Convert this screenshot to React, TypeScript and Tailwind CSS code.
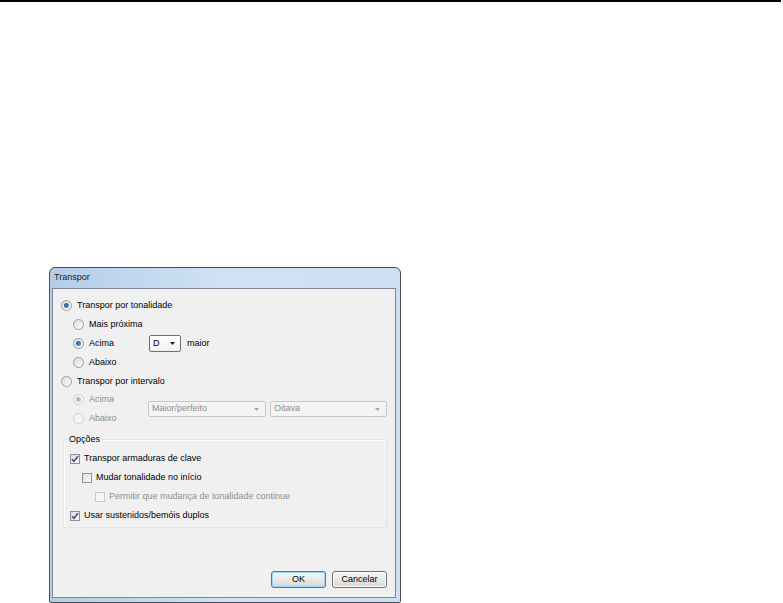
import React from 'react';

const font = { fontFamily: '"Liberation Sans", Arial, sans-serif' };

function Radio({ checked = false, disabled = false }: { checked?: boolean; disabled?: boolean }) {
  return (
    <span
      className={`flex items-center justify-center w-[11px] h-[11px] rounded-full border shrink-0 bg-gradient-to-br ${
        disabled ? 'border-[#cfcfcf] from-[#f0f0f0] to-[#f8f8f8]' : 'border-[#9a9c9e] from-[#dcdcdc] to-[#fbfbfb]'
      }`}
    >
      {checked && (
        <span
          className={`w-[5px] h-[5px] rounded-full bg-gradient-to-br ${
            disabled ? 'from-[#a8a8a8] to-[#cfcfcf]' : 'from-[#1d4f80] to-[#5fa0d6]'
          }`}
        />
      )}
    </span>
  );
}

function Check({ checked = false, disabled = false }: { checked?: boolean; disabled?: boolean }) {
  return (
    <span
      className={`flex items-center justify-center w-[10px] h-[10px] border shrink-0 bg-gradient-to-br ${
        disabled ? 'border-[#cacaca] from-[#f2f2f2] to-[#f8f8f8]' : 'border-[#8e9092] from-[#dcdcdc] to-[#fbfbfb]'
      }`}
    >
      {checked && (
        <svg width="8" height="8" viewBox="0 0 8 8">
          <path d="M1 4.2 L3 6.3 L7 1.2" fill="none" stroke="#3b4f87" strokeWidth="1.6" />
        </svg>
      )}
    </span>
  );
}

function RadioRow({ label, checked, disabled, indent }: { label: string; checked?: boolean; disabled?: boolean; indent: string }) {
  return (
    <div className={`h-[19px] flex items-center ${indent}`}>
      <Radio checked={checked} disabled={disabled} />
      <span className={`ml-[5px] ${disabled ? 'text-[#8f8f8f]' : 'text-black'}`}>{label}</span>
    </div>
  );
}

function CheckRow({ label, checked, disabled, indent }: { label: string; checked?: boolean; disabled?: boolean; indent: string }) {
  return (
    <div className={`h-[19px] flex items-center ${indent}`}>
      <Check checked={checked} disabled={disabled} />
      <span className={`ml-[4px] ${disabled ? 'text-[#8f8f8f]' : 'text-black'}`}>{label}</span>
    </div>
  );
}

function Arrow({ color }: { color: string }) {
  return (
    <svg width="5" height="3" viewBox="0 0 5 3">
      <path d="M0 0 H5 L2.5 3 Z" fill={color} />
    </svg>
  );
}

function DisabledSelect({ label, width }: { label: string; width: string }) {
  return (
    <div className={`${width} h-[16px] flex items-center justify-between border border-[#c4c8cc] bg-[#f4f4f4] rounded-[2px] pl-[3px] pr-[6px] text-[#8c8c8c]`}>
      <span>{label}</span>
      <Arrow color="#a8a8a8" />
    </div>
  );
}

function Button({ label, primary = false }: { label: string; primary?: boolean }) {
  return (
    <div
      className={`w-[55px] h-[17px] flex items-center justify-center rounded-[3px] border bg-gradient-to-b from-[#f6f6f6] via-[#e9e9e9] to-[#d7d7d7] ${
        primary ? 'border-[#3c7fb1] shadow-[inset_0_0_0_1px_#9fd6f5]' : 'border-[#707070] shadow-[inset_0_0_0_1px_#fcfcfc]'
      }`}
    >
      {label}
    </div>
  );
}

export default function App() {
  return (
    <div className="w-[783px] h-[603px] bg-white overflow-hidden text-[9px] text-black" style={font}>
      <div className="h-[2px] w-[781px] bg-black" />
      <div className="ml-[49px] mt-[265px] w-[352px] h-[336px] flex flex-col border border-[#4a4f55] rounded-t-[6px] rounded-b-[2px] bg-gradient-to-r from-[#b3cde9] via-[#d0e2f4] to-[#cde0f2]">
        <div className="h-[20px] flex items-center pl-[4px] text-[#1b1b1b]">Transpor</div>
        <div className="flex-1 ml-[2px] mr-[4px] mb-[4px] border border-[#7b8796] bg-[#f0f0f0] flex flex-col pt-[7px]">
          <RadioRow label="Transpor por tonalidade" checked indent="pl-[8px]" />
          <RadioRow label="Mais próxima" indent="pl-[20px]" />
          <div className="h-[19px] flex items-center pl-[20px]">
            <div className="w-[76px] flex items-center">
              <Radio checked />
              <span className="ml-[5px]">Acima</span>
            </div>
            <div className="w-[32px] h-[17px] flex items-center justify-between border border-[#707070] rounded-[2px] bg-gradient-to-b from-[#ffffff] to-[#f0f0f0] pl-[3px] pr-[5px]">
              <span>D</span>
              <Arrow color="#1b1b1b" />
            </div>
            <span className="ml-[6px]">maior</span>
          </div>
          <RadioRow label="Abaixo" indent="pl-[20px]" />
          <RadioRow label="Transpor por intervalo" indent="pl-[8px]" />
          <div className="flex items-center pl-[20px] -mt-[1px]">
            <div className="w-[75px] flex flex-col">
              <div className="h-[19px] flex items-center">
                <Radio checked disabled />
                <span className="ml-[5px] text-[#8f8f8f]">Acima</span>
              </div>
              <div className="h-[19px] flex items-center">
                <Radio disabled />
                <span className="ml-[5px] text-[#8f8f8f]">Abaixo</span>
              </div>
            </div>
            <DisabledSelect label="Maior/perfeito" width="w-[118px]" />
            <div className="w-[4px]" />
            <DisabledSelect label="Oitava" width="w-[117px]" />
          </div>
          <div className="relative ml-[10px] mr-[7px] mt-[11px] border border-[#e2e4e6] rounded-[2px] pt-[9px] pb-[2px] shadow-[inset_1px_1px_0_#ffffff]">
            <span className="absolute -top-[7px] left-[4px] px-[1px] bg-[#f0f0f0]">Opções</span>
            <CheckRow label="Transpor armaduras de clave" checked indent="pl-[6px]" />
            <CheckRow label="Mudar tonalidade no início" indent="pl-[18px]" />
            <CheckRow label="Permitir que mudança de tonalidade continue" disabled indent="pl-[31px]" />
            <CheckRow label="Usar sustenidos/bemóis duplos" checked indent="pl-[6px]" />
          </div>
          <div className="mt-auto flex justify-end gap-[6px] pr-[8px] pb-[9px]">
            <Button label="OK" primary />
            <Button label="Cancelar" />
          </div>
        </div>
      </div>
    </div>
  );
}
